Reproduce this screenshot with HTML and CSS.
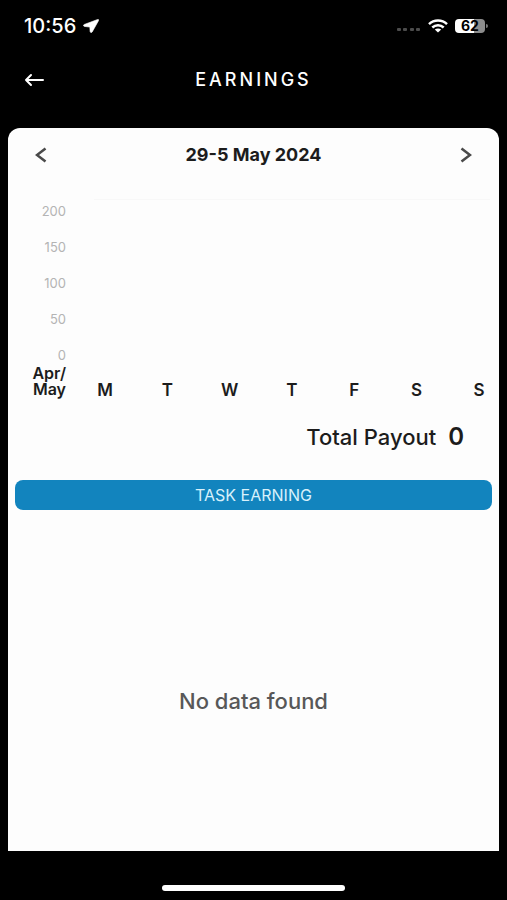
FILE: index.html
```html
<!DOCTYPE html>
<html lang="en">
<head>
<meta charset="utf-8">
<meta name="viewport" content="width=device-width, initial-scale=1">
<title>Earnings</title>
<link rel="stylesheet" href="styles.css">
</head>
<body>
<div class="status">
  <div class="status-group">
    <span class="clock">10:56</span>
    <svg class="location" viewBox="0 0 16 14" aria-hidden="true"><path d="M14.600.5 1.200 5.500c-1.100.4-.9 1.700.2 1.900l5.400.7.300 4.400c.1 1.200 1.500 1.400 2.100.4L15.600 1.500c.4-.7-.2-1.300-1-1Z" fill="currentColor" stroke="currentColor" stroke-width=".6"/></svg>
  </div>
  <div class="status-group">
    <svg class="signal" viewBox="0 0 24 14" aria-hidden="true"><g fill="#4c4c4c"><rect x="0" y="9" width="4" height="3" rx="1"/><rect x="6" y="9" width="4" height="3" rx="1"/><rect x="13" y="9" width="4" height="3" rx="1"/><rect x="19" y="9" width="4" height="3" rx="1"/></g></svg>
    <svg class="wifi" viewBox="0 0 20 14" aria-hidden="true"><g fill="none" stroke="currentColor" stroke-width="2.500"><path d="M1 5.200C6 .4 14 .4 19 5.200"/><path d="M4.300 8.500c3.200-3 8.200-3 11.400 0"/></g><path d="M6.800 10.600c1.800-1.500 4.600-1.500 6.400 0L10 13.400Z" fill="currentColor"/></svg>
    <div class="battery"><span class="battery-level">62</span></div>
  </div>
</div>
<header class="header">
  <button class="icon-button" type="button" aria-label="Back">
    <svg class="back" viewBox="0 0 20 14" aria-hidden="true"><path d="M7 2 2 7l5 5M2 7h17" fill="none" stroke="currentColor" stroke-width="2" stroke-linecap="round" stroke-linejoin="round"/></svg>
  </button>
  <h1 class="title">EARNINGS</h1>
</header>
<main class="card">
  <div class="week">
    <button class="icon-button" type="button" aria-label="Previous week">
      <svg class="chevron" viewBox="0 0 12 16" aria-hidden="true"><path d="M10.500 1.500 2 8l8.500 6.500" fill="none" stroke="currentColor" stroke-width="2.600"/></svg>
    </button>
    <h2 class="range">29-5 May 2024</h2>
    <button class="icon-button" type="button" aria-label="Next week">
      <svg class="chevron" viewBox="0 0 12 16" aria-hidden="true"><path d="M1.500 1.500 10 8l-8.500 6.500" fill="none" stroke="currentColor" stroke-width="2.600"/></svg>
    </button>
  </div>
  <section class="chart" aria-label="Weekly earnings">
    <div class="scale"><span>200</span><span>150</span><span>100</span><span>50</span><span>0</span></div>
    <div class="plot"></div>
    <div class="month">Apr/<br>May</div>
    <div class="days"><span>M</span><span>T</span><span>W</span><span>T</span><span>F</span><span>S</span><span>S</span></div>
  </section>
  <p class="payout"><span>Total Payout</span><strong class="amount">0</strong></p>
  <button class="task" type="button">TASK EARNING</button>
  <p class="empty">No data found</p>
</main>
<footer class="footer"><div class="home"></div></footer>
</body>
</html>
```
FILE: styles.css
```css
* {
  box-sizing: border-box;
}

body {
  margin: 0;
  min-height: 100vh;
  display: flex;
  flex-direction: column;
  background: #000;
  color: #fff;
  font-family: Inter, "Liberation Sans", sans-serif;
}

h1, h2, p {
  margin: 0;
}

svg {
  display: block;
}

button {
  border: 0;
  padding: 0;
  background: none;
  color: inherit;
  font: inherit;
  cursor: pointer;
}

.status {
  height: 52px;
  padding: 0 20px 0 24px;
  display: flex;
  align-items: center;
  justify-content: space-between;
}

.status-group {
  display: flex;
  align-items: center;
  gap: 7px;
}

.clock {
  font-size: 20px;
  font-weight: 500;
  line-height: 20px;
}

.location {
  width: 16px;
  height: 14px;
}

.signal {
  width: 24px;
  height: 14px;
}

.wifi {
  width: 20px;
  height: 14px;
}

.battery {
  position: relative;
  width: 30px;
  height: 14px;
  margin-right: 2px;
  border-radius: 4px;
  background: linear-gradient(to right, #fff 62%, #8c8c8c 62%);
  color: #000;
  text-align: center;
}

.battery::after {
  content: "";
  position: absolute;
  top: 5px;
  right: -3px;
  width: 2px;
  height: 4px;
  border-radius: 0 2px 2px 0;
  background: #777;
}

.battery-level {
  display: block;
  font-size: 14px;
  font-weight: 700;
  line-height: 14px;
}

.header {
  height: 56px;
  padding: 0 20px;
  display: grid;
  grid-template-columns: 28px 1fr 28px;
  align-items: center;
}

.icon-button {
  width: 28px;
  height: 28px;
  display: grid;
  place-items: center;
}

.back {
  width: 20px;
  height: 14px;
}

.title {
  font-size: 18px;
  font-weight: 500;
  line-height: 20px;
  letter-spacing: 3px;
  text-align: center;
}

.card {
  flex: 1;
  margin: 20px 8px 0;
  display: flex;
  flex-direction: column;
  border-radius: 12px 12px 0 0;
  background: #fdfdfd;
  color: #1c1c1c;
}

.week {
  height: 53px;
  padding: 0 19px;
  display: flex;
  align-items: center;
  justify-content: space-between;
  color: #4a4a4a;
}

.range {
  color: #1c1c1c;
  font-size: 18px;
  font-weight: 700;
  line-height: 24px;
}

.chevron {
  width: 12px;
  height: 16px;
}

.chart {
  padding: 18px 9px 0 20px;
  display: grid;
  grid-template-columns: 38px 1fr;
  column-gap: 28px;
}

.scale {
  margin-top: 6px;
  display: flex;
  flex-direction: column;
  gap: 24px;
  color: #b4b4b4;
  font-size: 13px;
  line-height: 12px;
  text-align: right;
}

.plot {
  border-top: 1px solid #f8f8f8;
}

.month {
  padding-top: 4px;
  font-size: 16px;
  font-weight: 600;
  line-height: 16px;
  text-align: right;
}

.days {
  padding-top: 19px;
  display: flex;
  justify-content: space-between;
  font-size: 17px;
  font-weight: 600;
  line-height: 20px;
}

.days span {
  width: 22px;
  text-align: center;
}

.payout {
  margin-top: 23px;
  padding-right: 35px;
  display: flex;
  align-items: center;
  justify-content: flex-end;
  gap: 12px;
  font-size: 22px;
  font-weight: 500;
  line-height: 28px;
}

.amount {
  font-size: 24px;
  font-weight: 600;
}

.task {
  height: 30px;
  margin: 29px 7px 0;
  border-radius: 8px;
  background: #1284be;
  color: #d8f1fb;
  font-size: 16px;
  line-height: 20px;
}

.empty {
  flex: 1;
  padding-top: 41px;
  display: grid;
  place-items: center;
  color: #585858;
  font-size: 22px;
  font-weight: 500;
  line-height: 28px;
}

.footer {
  height: 49px;
  padding-bottom: 9px;
  display: flex;
  align-items: flex-end;
  justify-content: center;
}

.home {
  width: 36%;
  height: 6px;
  border-radius: 3px;
  background: #fff;
}
```
